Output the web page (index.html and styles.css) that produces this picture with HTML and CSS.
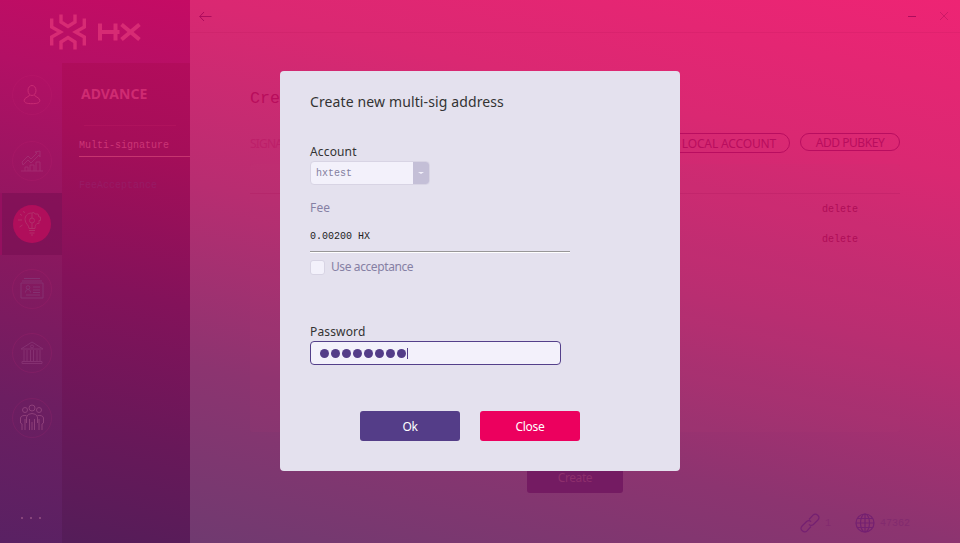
FILE: index.html
```html
<!DOCTYPE html>
<html lang="en">
<head>
<meta charset="utf-8">
<title>HX Wallet</title>
<link rel="stylesheet" href="styles.css">
</head>
<body>
<div class="app">
  <aside class="sidebar">
    <div class="brand">
      <svg class="brand-mark" viewBox="0 0 36 36" stroke-width="3.4">
        <path d="M11 .5v7.500L18 12.500l7-4.500V.5M11 35.500V28L18 23.500l7 4.500v7.500M1.700 4.500v8.500L10.500 18 1.700 23v8.500M34.300 4.500v8.500L25.500 18l8.800 5v8.500"/>
      </svg>
      <svg class="brand-name" viewBox="0 0 44 18" stroke-width="4">
        <path d="M2 .5v17M17.500 .5v17M2 9h19.500M23.500 1.500l18 15M41.500 1.500l-18 15"/>
      </svg>
    </div>
    <div class="sidebar-body">
      <nav class="rail">
        <div class="rail-item bright"><span class="ring"><svg viewBox="0 0 30 30"><ellipse cx="15" cy="10.500" rx="4" ry="5"/><path d="M12.500 15c0 2-5 2-5.300 5.500 0 2.500 3 3.200 7.800 3.200s7.800-.7 7.800-3.200c-.3-3.500-5.300-3.500-5.300-5.500"/></svg></span></div>
        <div class="rail-item"><span class="ring"><svg viewBox="0 0 30 30"><path d="M4 25h22M8 25v-4h3v4M13 25v-6h4v6M19 25v-9h4v9M5 16l6-6 3 3 6-6-2-1 5-1 0 6-1-2-8 8-3-3-5 5z"/></svg></span></div>
        <div class="rail-item active"><span class="ring"><svg viewBox="0 0 30 30"><path d="M14.500 4c-4 0-6.500 3-6.500 6.500 0 4 4 5.500 4 9h6c0-3 1-4 2-5h2v-3h1.500V8H22l-1-3h-3l-1-1.500zM12 21.500h6M12.500 24h5M14 26h2M15 4v5M15 14v5M3 5l2 1.500M1 11h4M2.500 18l3-2M6.500 2l1 2"/><circle cx="15" cy="11.500" r="2.500"/></svg></span></div>
        <div class="rail-item"><span class="ring"><svg viewBox="0 0 30 30"><path d="M4 9h22v15H4zM5 7h20M7 4.500h16M8.500 18.500c0-4 5-4 5 0M16 13h7M16 16h7M16 18.500h7M9 21h14"/><circle cx="11" cy="13.500" r="1.800"/></svg></span></div>
        <div class="rail-item"><span class="ring"><svg viewBox="0 0 30 30"><path d="M4 11l11-7 11 7zM7 12v11M10 12v11M13.500 12v11M16.500 12v11M20 12v11M23 12v11M5 23.500h20v2H5z"/><circle cx="15" cy="8.500" r="1.500"/></svg></span></div>
        <div class="rail-item bright"><span class="ring"><svg viewBox="0 0 30 30"><circle cx="15" cy="5" r="3"/><circle cx="8" cy="7" r="2.500"/><circle cx="22" cy="7" r="2.500"/><path d="M12.500 27V16M9.500 20v-6q1-3.500 5.500-3.500t5.500 3.500v6M17.500 16v11M15 19v8M9.500 12.500q-5.500-.5-6 2.500v5l1.500 1v6M8 16v11M20.500 12.500q5.500-.5 6 2.500v5L25 21v6M22 16v11"/></svg></span></div>
        <div class="rail-more"><i></i><i></i><i></i></div>
      </nav>
      <section class="submenu">
        <h2>ADVANCE</h2>
        <a class="sub-link current">Multi-signature</a>
        <a class="sub-link">FeeAcceptance</a>
      </section>
    </div>
  </aside>
  <main class="main">
    <header class="topbar">
      <svg class="back" viewBox="0 0 13 11"><path d="M5 1L.7 5.500 5 10M.7 5.500H12.500"/></svg>
      <div class="window-controls">
        <svg class="min" viewBox="0 0 10 10"><path d="M1 5.500h8"/></svg>
        <svg class="exit" viewBox="0 0 10 10"><path d="M1 1l8 8M9 1L1 9"/></svg>
      </div>
    </header>
    <div class="page">
      <h1>Cre</h1>
      <div class="toolbar">
        <span class="toolbar-label">SIGNA</span>
        <span class="pill pill-local">LOCAL ACCOUNT</span>
        <span class="pill pill-key">ADD PUBKEY</span>
      </div>
      <div class="table">
        <div class="table-head"></div>
        <div class="table-row">delete</div>
        <div class="table-row">delete</div>
      </div>
      <div class="create">Create</div>
    </div>
    <footer class="status">
      <svg class="chain" viewBox="0 0 20 20"><path d="M9 6.500l4-4.300q2.200-2.200 4.700 0t.2 4.800l-4.500 4.500q-2.300 2-4.500-.2M11 13.500l-4 4.300q-2.200 2.200-4.700 0t-.2-4.800L6.600 8.500q2.300-2 4.500.2"/></svg>
      <span class="peers">1</span>
      <svg class="globe" viewBox="0 0 20 20"><circle cx="10" cy="10" r="9"/><ellipse cx="10" cy="10" rx="4.500" ry="9"/><path d="M10 1v18M1 10h18M2.500 5.500h15M2.500 14.500h15"/></svg>
      <span class="height">47362</span>
    </footer>
  </main>
  <div class="dialog">
    <h3>Create new multi-sig address</h3>
    <label class="field-label account-label">Account</label>
    <div class="select"><span>hxtest</span><b></b></div>
    <label class="field-label fee-label">Fee</label>
    <div class="fee">0.00200 HX</div>
    <div class="accept"><i></i><span>Use acceptance</span></div>
    <label class="field-label">Password</label>
    <div class="password"><i></i><i></i><i></i><i></i><i></i><i></i><i></i><i></i><u></u></div>
    <div class="actions"><div class="btn ok">Ok</div><div class="btn close">Close</div></div>
  </div>
</div>
</body>
</html>
```
FILE: styles.css
```css
* { box-sizing: border-box; margin: 0; padding: 0; }
body { font-family: "Noto Sans", "Open Sans", sans-serif; font-size: 12px; overflow: hidden; }
svg { display: block; fill: none; stroke: currentColor; flex: none; }
.app {
  position: relative; display: flex; width: 960px; height: 543px;
  background: linear-gradient(193deg, #ee2474 0%, #da2872 23%, #b82d71 47%, #8c3470 71%, #703a70 94%, #6b3b70 100%);
}
.sidebar {
  width: 190px; display: flex; flex-direction: column;
  background: linear-gradient(193deg, #c50b64 0%, #b31065 17%, #8b185f 48%, #6c1e61 75%, #592163 100%);
}
.brand { height: 63px; display: flex; align-items: center; gap: 12px; padding: 1px 0 0 50px; color: #d72b74; }
.brand-mark { width: 36px; height: 36px; }
.brand-name { width: 44px; height: 18px; }
.sidebar-body { flex: 1; display: flex; }
.rail { width: 62px; display: flex; flex-direction: column; color: #a32a70; padding-top: 0; }
.rail-item { height: 65px; display: flex; align-items: center; justify-content: center; padding-left: 2px; }
.rail-item:first-child { padding-bottom: 2px; }
.rail-item:nth-child(3) { height: 62px; }
.rail-item:nth-child(4) { height: 67px; }
.rail-item:nth-child(5) { height: 64px; }
.rail-item:nth-child(5), .rail-item:nth-child(6) { padding-bottom: 2px; }
.rail-item svg { width: 30px; height: 30px; stroke-width: 1; }
.ring { width: 40px; height: 40px; border: 1px solid rgba(205, 40, 120, .14); border-radius: 50%; display: grid; place-items: center; }
.rail-item:nth-child(n+4) { color: #853071; }
.rail-item.bright { color: #c82b73; }
.rail-item.bright:nth-child(6) { color: #8d3e79; }
.rail-item.active { background: rgba(115, 12, 80, .5); border-left: 2px solid #94105f; padding-left: 0; color: #b22d6a; }
.rail-item.active .ring { width: 38px; height: 38px; background: #b00e5b; border: 0; }
.rail-more { display: flex; gap: 7px; margin: auto 0 24px 21px; }
.rail-more i { width: 2px; height: 2px; background: #87447b; }
.submenu { width: 128px; padding: 21px 0 0 17px; background: linear-gradient(193deg, #b30c5c 0%, #a50e59 18%, #83125a 48%, #681859 76%, #541d59 100%); }
.submenu h2 { font: bold 14px/19px "Noto Sans", sans-serif; color: #cf2b72; margin-left: 5px; text-indent: -3px; width: 92px; height: 42px; border-bottom: 1px solid rgba(190, 30, 100, .35); letter-spacing: 0; }
.sub-link { display: block; font: 10px/15px "Liberation Mono", monospace; color: #981b65; height: 40px; padding-top: 12px; }
.sub-link.current { color: #cb3576; height: 31px; border-bottom: 1px solid #c6356f; }
.sub-link:last-child { padding-top: 21px; }
.main { flex: 1; display: flex; flex-direction: column; }
.topbar { height: 33px; display: flex; justify-content: space-between; padding: 11px 11px 0 9px; border-bottom: 1px solid rgba(180, 20, 90, .16); color: #af0c5d; }
.back { width: 13px; height: 11px; stroke-width: 1; }
.window-controls { display: flex; gap: 22px; }
.window-controls svg { width: 10px; height: 10px; }
.exit { color: #ce1a67; }
.page { flex: 1; padding: 52px 60px 0; display: flex; flex-direction: column; }
.page h1 { font: 16.7px/27px "Liberation Mono", monospace; color: #b80d5c; height: 48px; }
.toolbar { display: flex; height: 31px; color: #b90d5e; align-items: flex-start; }
.toolbar-label { flex: 1; line-height: 21px; color: #bd1f69; letter-spacing: -.8px; }
.pill { border: 1px solid #b90d60; border-radius: 11px; text-align: center; white-space: nowrap; }
.pill-local { width: 150px; height: 20px; line-height: 19px; margin-right: 10px; text-align: right; padding-right: 13px; letter-spacing: -.15px; }
.pill-key { width: 100px; height: 18px; line-height: 17px; letter-spacing: -.45px; }
.table { height: 268px; background: rgba(185, 65, 120, .08); border-radius: 3px; }
.table-head { height: 30px; border-bottom: 1px solid rgba(170, 20, 90, .25); }
.table-row { height: 30px; padding-right: 42px; text-align: right; font: 10px/32px "Liberation Mono", monospace; color: #af0d57; }
.create { width: 96px; height: 30px; margin: 31px 0 0 277px; background: #741b62; border-radius: 3px; color: #8d2e6c; text-align: center; line-height: 30px; letter-spacing: -.4px; }
.status { height: 40px; display: flex; align-items: center; justify-content: flex-end; padding-right: 50px; color: #742071; font: 10px "Liberation Mono", monospace; }
.status svg { width: 20px; height: 20px; stroke-width: 1.2; }
.status span { color: #822a6e; margin-left: 5px; }
.peers { width: 30px; }
.dialog { position: absolute; left: 280px; top: 71px; width: 400px; height: 400px; padding: 20px 30px 0; background: #e4e1ee; border-radius: 4px; color: #333; }
.dialog h3 { font: 14px/22px "Noto Sans", sans-serif; height: 51px; letter-spacing: .12px; }
.field-label { display: block; height: 20px; line-height: 21px; letter-spacing: .15px; }
.account-label { height: 19px; line-height: 20px; }
.select { display: flex; width: 120px; height: 24px; background: #f3f1fb; border: 1px solid #d8d4e4; border-radius: 4px; overflow: hidden; font: 10px/24px "Liberation Mono", monospace; color: #8380a0; padding-left: 5px; }
.select span { flex: 1; }
.select b { width: 16px; background: #c4bfd7; display: grid; place-items: center; }
.select b::after { content: ""; border: 3px solid transparent; border-top: 2px solid #f3f1fb; border-bottom: 0; }
.fee-label { margin-top: 12px; color: #8680a4; }
.fee { width: 260px; height: 35px; font: 10px/40px "Liberation Mono", monospace; color: #222; border-bottom: 1px solid #989798; box-shadow: 0 1px #fff; margin-bottom: 6px; }
.accept { display: flex; align-items: center; gap: 6px; height: 18px; line-height: 18px; color: #8680a4; margin-bottom: 45px; letter-spacing: -.4px; }
.accept i { width: 15px; height: 15px; border: 1px solid #d8d4e4; border-radius: 3px; background: #f3f1fb; }
.password { display: flex; align-items: center; gap: 2px; width: 251px; height: 24px; border: 1px solid #54408a; border-radius: 4px; background: #f3f1fb; padding-left: 9px; }
.password i { width: 9px; height: 9px; border-radius: 50%; background: #543d88; }
.password u { width: 1px; height: 11px; background: #543d88; margin-left: -1px; }
.actions { display: flex; gap: 20px; margin: 46px 0 0 50px; }
.btn { width: 100px; height: 30px; line-height: 31px; text-align: center; border-radius: 3px; color: #fff; letter-spacing: -.3px; }
.ok { background: #543d88; }
.close { background: #ec005e; }
```
